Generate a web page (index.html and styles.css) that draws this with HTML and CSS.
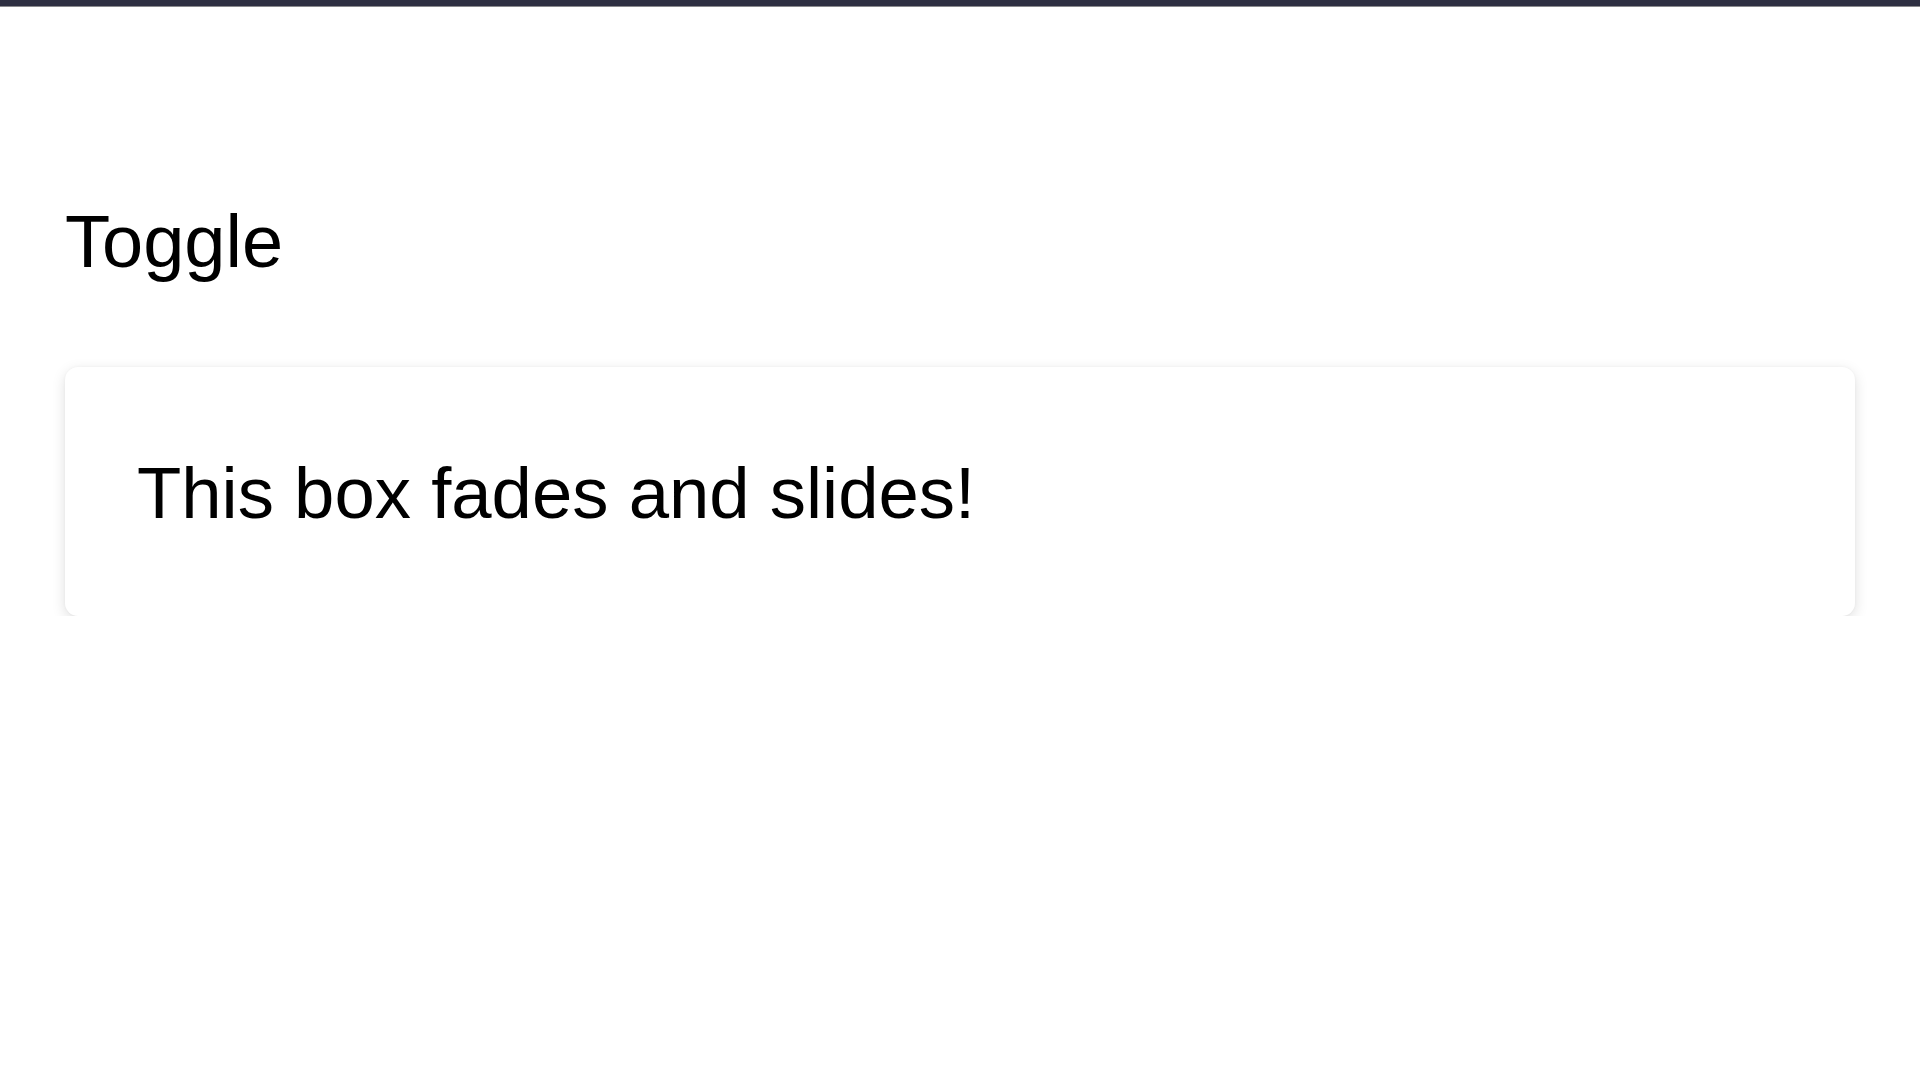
FILE: index.html
```html
<!DOCTYPE html>
<html lang="en">
<head>
<meta charset="utf-8">
<title>Toggle</title>
<link rel="stylesheet" href="styles.css">
</head>
<body>
<div class="topbar"></div>
<main class="page">
  <button class="toggle" type="button">Toggle</button>
  <div class="box">This box fades and slides!</div>
</main>
</body>
</html>
```
FILE: styles.css
```css
html, body {
  margin: 0;
  padding: 0;
  background: #ffffff;
}
body {
  font-family: "Liberation Sans", Arial, Helvetica, sans-serif;
  color: #000;
}
.topbar {
  height: 6px;
  background: #2e2f42;
  border-bottom: 1px solid #8a8a8e;
}
.page {
  padding: 191px 65px 0 65px;
  display: flex;
  flex-direction: column;
  align-items: flex-start;
}
.toggle {
  font: inherit;
  font-size: 74px;
  line-height: 1.2;
  background: none;
  border: 0;
  padding: 0;
  margin: 0;
  color: #000;
  cursor: pointer;
}
.box {
  margin-top: 80px;
  align-self: stretch;
  background: #fff;
  border-radius: 13px;
  box-shadow: 0 4px 14px rgba(0, 0, 0, 0.13), 0 0 3px rgba(0, 0, 0, 0.04);
  padding: 82px 72px 80px;
  font-size: 72.5px;
  line-height: 1.2;
}
```
